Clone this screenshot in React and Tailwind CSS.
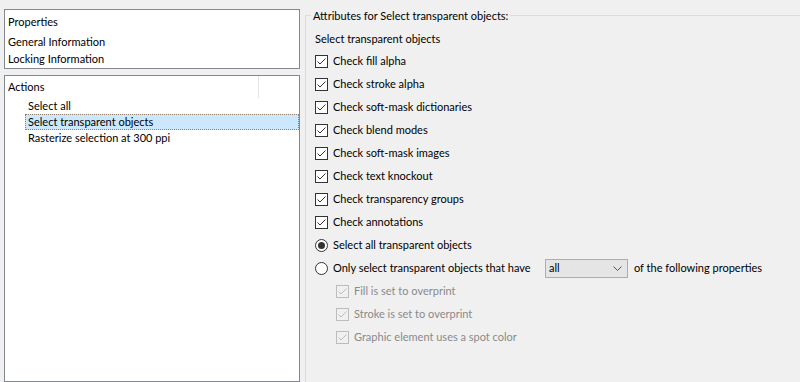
import { useState } from "react";

const opciones = [
  "Check fill alpha",
  "Check stroke alpha",
  "Check soft-mask dictionaries",
  "Check blend modes",
  "Check soft-mask images",
  "Check text knockout",
  "Check transparency groups",
  "Check annotations",
];

const propiedades = [
  "Fill is set to overprint",
  "Stroke is set to overprint",
  "Graphic element uses a spot color",
];

function Casilla({ marcada, deshabilitada }) {
  const borde = deshabilitada ? "border-[#bcbcbc] bg-[#f0f0f0]" : "border-[#333333] bg-white";
  return (
    <span className={`flex h-[13px] w-[13px] shrink-0 items-center justify-center border ${borde}`}>
      {marcada && (
        <svg width="11" height="11" viewBox="0 0 11 11">
          <path d="M1.5 5.5 L4 8 L9.5 2.5" fill="none" stroke={deshabilitada ? "#bcbcbc" : "#333333"} strokeWidth="1" />
        </svg>
      )}
    </span>
  );
}

function Radio({ marcado }) {
  return (
    <span className="flex h-[13px] w-[13px] shrink-0 items-center justify-center rounded-full border border-[#333333] bg-white">
      {marcado && <span className="h-[7px] w-[7px] rounded-full bg-[#333333]" />}
    </span>
  );
}

export default function App() {
  const [seleccion, setSeleccion] = useState("todos");

  return (
    <main className="flex h-[382px] w-[800px] overflow-hidden whitespace-nowrap bg-[#f0f0f0] font-['Lato',sans-serif] text-[11px] text-black">
      <div className="ml-1 mt-[9px] flex w-[296px] shrink-0 flex-col gap-[6px]">
        <div className="h-[60px] border border-[#828790] bg-white pl-[3px] pt-[3px] leading-[17px]">
          <p className="mb-[3px]">Properties</p>
          <p>General Information</p>
          <p>Locking Information</p>
        </div>

        <div className="flex-1 border border-[#828790] bg-white">
          <div className="flex h-[22px] items-center">
            <span className="w-[254px] border-r border-[#e5e5e5] pl-[3px] leading-[22px]">Actions</span>
          </div>
          <div className="leading-[14px]">
            <p className="ml-[20px] h-[16px] border border-transparent pl-[2px]">Select all</p>
            <p className="ml-[20px] h-[16px] border border-dotted border-[#8f7f6f] bg-[#cce8ff] pl-[2px]">Select transparent objects</p>
            <p className="ml-[20px] h-[16px] border border-transparent pl-[2px]">Rasterize selection at 300 ppi</p>
          </div>
        </div>
      </div>

      <section className="relative ml-[5px] mt-[15px] flex-1 border-l border-t border-[#dcdcdc] pl-[9px] pt-[15px]">
        <span className="absolute left-[5px] top-[-8px] bg-[#f0f0f0] px-[2px] leading-[15px]">
          Attributes for Select transparent objects:
        </span>

        <p className="h-[16px] leading-[16px]">Select transparent objects</p>

        <div className="mt-[3px]">
          {opciones.map((texto) => (
            <div className="flex h-[23px] items-center gap-[5px]" key={texto}>
              <Casilla marcada />
              <span>{texto}</span>
            </div>
          ))}

          <button type="button" className="flex h-[23px] items-center gap-[5px]" onClick={() => setSeleccion("todos")}>
            <Radio marcado={seleccion === "todos"} />
            <span>Select all transparent objects</span>
          </button>

          <div className="flex h-[23px] items-center">
            <button type="button" className="flex w-[230px] shrink-0 items-center gap-[5px]" onClick={() => setSeleccion("algunos")}>
              <Radio marcado={seleccion === "algunos"} />
              <span>Only select transparent objects that have</span>
            </button>
            <span className="flex h-[19px] w-[83px] shrink-0 items-center justify-between border border-[#adadad] bg-[#e5e5e5] pl-[3px] pr-[5px]">
              all
              <svg width="9" height="5" viewBox="0 0 9 5">
                <path d="M0.5 0.5 L4.5 4.5 L8.5 0.5" fill="none" stroke="#555555" strokeWidth="1" />
              </svg>
            </span>
            <span className="ml-[6px]">of the following properties</span>
          </div>

          {propiedades.map((texto) => (
            <div className="ml-[21px] flex h-[23px] items-center gap-[5px] text-[#8a8a8a]" key={texto}>
              <Casilla marcada deshabilitada />
              <span>{texto}</span>
            </div>
          ))}
        </div>
      </section>
    </main>
  );
}
